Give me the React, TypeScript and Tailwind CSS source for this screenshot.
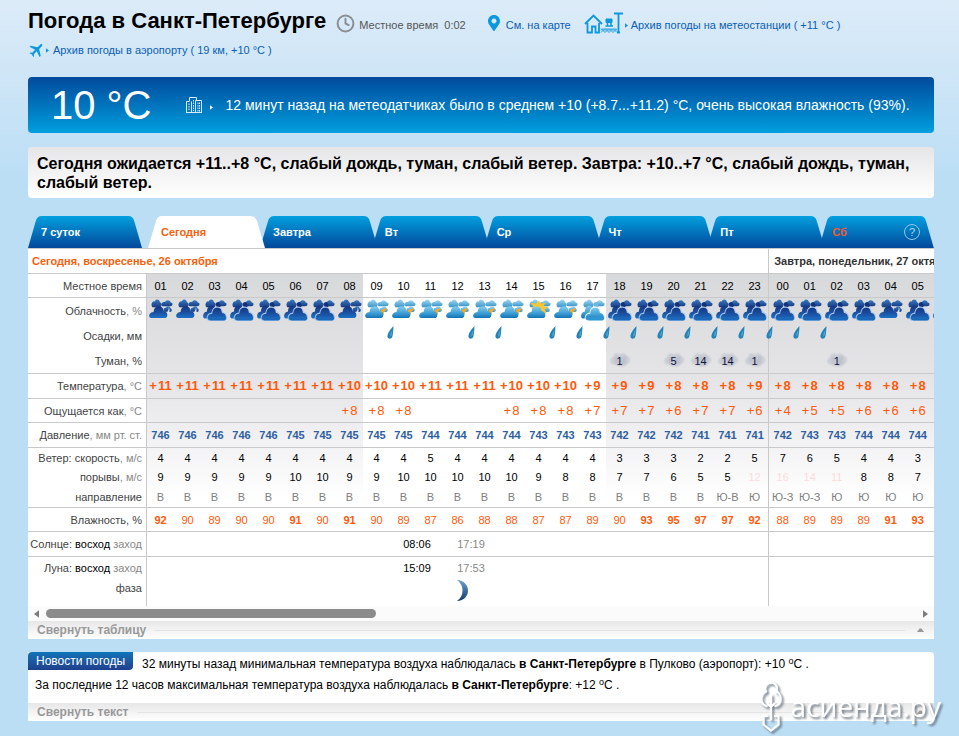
import React from "react";
import { Clock } from "lucide-react";
import { MdFlight } from "react-icons/md";
import { FaMapMarkerAlt } from "react-icons/fa";

type Sky = "overcast" | "moon" | "sun" | "bright" | "cloudy";

interface Hour {
  h: string;
  sky: Sky;
  rain?: boolean;
  fog?: string;
  t: string;
  feels?: string;
  p: string;
  wind: string;
  gust: string;
  dir: string;
  hum: string;
}

const hour = (
  h: string, sky: Sky, t: string, feels: string, p: string, wind: string,
  gust: string, dir: string, hum: string, rain = false, fog = ""
): Hour => ({ h, sky, t, feels, p, wind, gust, dir, hum, rain, fog });

const hours: Hour[] = [
  hour("01", "moon", "11", "", "746", "4", "9", "В", "92"),
  hour("02", "moon", "11", "", "746", "4", "9", "В", "90"),
  hour("03", "overcast", "11", "", "746", "4", "9", "В", "89"),
  hour("04", "overcast", "11", "", "746", "4", "9", "В", "90"),
  hour("05", "overcast", "11", "", "746", "4", "9", "В", "90"),
  hour("06", "overcast", "11", "", "745", "4", "10", "В", "91"),
  hour("07", "overcast", "11", "", "745", "4", "10", "В", "90"),
  hour("08", "moon", "10", "8", "745", "4", "9", "В", "91"),
  hour("09", "sun", "10", "8", "745", "4", "9", "В", "90"),
  hour("10", "sun", "10", "8", "745", "4", "10", "В", "89", true),
  hour("11", "sun", "11", "", "744", "5", "10", "В", "87"),
  hour("12", "sun", "11", "", "744", "4", "10", "В", "86"),
  hour("13", "sun", "11", "", "744", "4", "10", "В", "88", true),
  hour("14", "sun", "10", "8", "744", "4", "10", "В", "88", true),
  hour("15", "bright", "10", "8", "743", "4", "9", "В", "87"),
  hour("16", "sun", "10", "8", "743", "4", "8", "В", "87", true),
  hour("17", "cloudy", "9", "7", "743", "4", "8", "В", "89", true),
  hour("18", "overcast", "9", "7", "742", "3", "7", "В", "90", true, "1"),
  hour("19", "overcast", "9", "7", "742", "3", "7", "В", "93", true),
  hour("20", "overcast", "8", "6", "742", "3", "6", "В", "95", true, "5"),
  hour("21", "overcast", "8", "7", "741", "2", "5", "В", "97", true, "14"),
  hour("22", "overcast", "8", "7", "741", "2", "5", "Ю-В", "97", true, "14"),
  hour("23", "overcast", "9", "6", "741", "5", "12", "Ю", "92", true, "1"),
  hour("00", "overcast", "8", "4", "742", "7", "16", "Ю-З", "88", true),
  hour("01", "overcast", "8", "5", "743", "6", "14", "Ю-З", "89", true),
  hour("02", "overcast", "8", "5", "743", "5", "11", "Ю", "89", true, "1"),
  hour("03", "overcast", "8", "6", "744", "4", "8", "Ю", "89"),
  hour("04", "moon", "8", "6", "744", "4", "8", "Ю", "91"),
  hour("05", "overcast", "8", "6", "744", "3", "7", "Ю", "93"),
];

const TODAY = 23;
const isDay = (i: number) => i >= 8 && i <= 16;

const CLOUD = "M2 12.500Q-.5 12 .3 9.200 1.500 6.200 4.500 6.400 5 1 10 .8 14 1 14.600 5.600 18.200 6 18.400 9.500 18.400 12 16.500 12.500z";
const PUFF = "M1.500 6.500Q-.5 4.500 1.500 2.500 3 1.500 4 2 5.500-.3 8 .6 9.500 1 10 2.500 12.500 3 11.500 5.500 11 6.700 9 6.700z";

function Defs() {
  return (
    <svg className="absolute size-0" aria-hidden="true">
      <defs>
        <linearGradient id="night" x1="0" y1="0" x2="0" y2="1">
          <stop offset="0" stopColor="#15357f" />
          <stop offset="0.5" stopColor="#1b4e9f" />
          <stop offset="1" stopColor="#1a72c8" />
        </linearGradient>
        <linearGradient id="nightBack" x1="0" y1="0" x2="0" y2="1">
          <stop offset="0" stopColor="#3a79bd" />
          <stop offset="1" stopColor="#173c86" />
        </linearGradient>
        <linearGradient id="day" x1="0" y1="0" x2="0" y2="1">
          <stop offset="0" stopColor="#86cdf0" />
          <stop offset="0.6" stopColor="#3c9ed3" />
          <stop offset="1" stopColor="#1272b6" />
        </linearGradient>
        <linearGradient id="dayBack" x1="0" y1="0" x2="0" y2="1">
          <stop offset="0" stopColor="#9fd9f3" />
          <stop offset="1" stopColor="#3994c8" />
        </linearGradient>
        <radialGradient id="fog">
          <stop offset="0" stopColor="#a9aebb" stopOpacity="0.5" />
          <stop offset="0.6" stopColor="#b4b9c5" stopOpacity="0.4" />
          <stop offset="1" stopColor="#bfc4cf" stopOpacity="0" />
        </radialGradient>
        <linearGradient id="moon" x1="0" y1="0" x2="0" y2="1">
          <stop offset="0" stopColor="#6fa3cd" />
          <stop offset="1" stopColor="#12396e" />
        </linearGradient>
      </defs>
    </svg>
  );
}

function SkyIcon({ sky }: { sky: Sky }) {
  const night = sky === "overcast" || sky === "moon";
  const back = night ? "url(#nightBack)" : "url(#dayBack)";
  const front = night ? "url(#night)" : "url(#day)";
  const full = sky === "overcast" || sky === "cloudy";
  return (
    <svg viewBox="0 0 24 22" className="mx-auto mt-px block h-[22px] w-6" aria-hidden="true">
      <path d={PUFF} fill={back} transform="translate(2 0) scale(.9 1.250)" />
      <path d={PUFF} fill={back} transform="translate(12 1) scale(.98 .95)" />
      {!full && <path d={PUFF} fill={back} transform="translate(14 7) scale(.75 .9)" />}
      {sky === "sun" && <path d="M16 11l6-2-3.500 5 .5 1-3.500 3.500z" fill="#fba91a" />}
      {sky === "moon" && <path d="M19.500 8c1 3-1.500 6-4 6.500l2.500 1.800c2.500-2 3.500-5 1.500-8.300z" fill="#dfe9f7" />}
      {sky === "bright" && (
        <path d="M12 1.500l1.500 3L19 4l-3 3.500 5.500.5-4 2.500 2 3-4 3.500L6 12 4.500 9l2-1.500L3.500 4l5.500.5z" fill="#fdc62d" />
      )}
      {full ? (
        <>
          <path d="M13 4.500L16 3l2 4-4 3z" fill={night ? "#14307a" : "#6db8de"} />
          <path d={CLOUD} fill={front} transform="translate(0 5.500) scale(.85 1.120)" />
          <path d={CLOUD} fill={front} stroke={night ? "#a9c8ea" : "#f0faff"} strokeWidth="0.900" transform="translate(4 7) scale(1.050 1.150)" />
          <path d="M5.500 18H23a2.500 2.500 0 0 1-1.800 3.500H7.500A2.500 2.500 0 0 1 5.500 18z" fill={night ? "#1b68ba" : "#2c97d2"} />
        </>
      ) : (
        <path d={CLOUD} fill={front} transform="translate(0 6.500)" />
      )}
    </svg>
  );
}

function Drop() {
  return (
    <svg viewBox="0 0 7 13" className="-ml-[3px] mt-[3px] block h-[13px] w-[7px]" aria-hidden="true">
      <path d="M6.500 0C3.500 3 .5 7.500.4 10.300c0 3 4 3.300 5 .2C6.200 8 6.200 4 6.500 0z" fill="#2583b8" />
      <path d="M5.500 4C4 6 3 8 3.200 10.500c1.800-.3 2-3 2.300-6.500z" fill="#4da6d2" />
    </svg>
  );
}

function Fog({ value }: { value: string }) {
  return (
    <div className="relative h-5">
      <svg viewBox="0 0 24 18" className="mx-auto block h-[18px] w-6" aria-hidden="true">
        <circle cx="6" cy="10" r="5" fill="url(#fog)" />
        <circle cx="9" cy="6" r="5" fill="url(#fog)" />
        <circle cx="15" cy="6" r="5" fill="url(#fog)" />
        <circle cx="18" cy="9" r="5.500" fill="url(#fog)" />
        <circle cx="11" cy="11" r="6" fill="url(#fog)" />
        <circle cx="15" cy="12" r="5" fill="url(#fog)" />
      </svg>
      <span className="absolute inset-0 text-center leading-5 text-[#101040]">{value}</span>
    </div>
  );
}

function Arrow({ className }: { className: string }) {
  return (
    <svg viewBox="0 0 4 6" className={className} aria-hidden="true">
      <path d="M0 0l4 3-4 3z" fill="currentColor" />
    </svg>
  );
}

function StationIcon() {
  return (
    <svg viewBox="0 0 39 22" className="h-[22px] w-[39px] shrink-0" fill="none" stroke="#0b98dd" aria-hidden="true">
      <path d="M1 12L9.500 3.500 18 12M3.500 11v9.500h4.500v-6h3.500v6H15V11" strokeWidth="1.800" />
      <path d="M22 7h6v3.500h-6z" fill="#0b98dd" />
      <path d="M23.500 10v3.500M27 10v3.500M21.500 14h7.500" strokeWidth="1.500" />
      <path d="M30 1.500h9M34.500 1v20M33 20.500h3" strokeWidth="1.800" />
      <path d="M17 16.500l2 2 2-2 2 2 2-2 2 2 2-2 2 2 2-2M17 18.500l2-2 2 2 2-2 2 2 2-2 2 2 2-2 2 2M17 20.500l2-2 2 2 2-2 2 2 2-2 2 2 2-2 2 2" strokeWidth="0.900" />
    </svg>
  );
}

function BuildingsIcon() {
  return (
    <svg viewBox="0 0 16 16" className="size-4 shrink-0" fill="none" stroke="#d5ecfb" aria-hidden="true">
      <path d="M.5 15.500v-11h3M3.500 4V.5h7V3M5.500 15.500v-11M9.500 15.500V3.500h6v12M0 15.500h16" />
      <path d="M3 6.500v7M7.500 3v11M12 5.500v9M13.500 5.500v9" strokeDasharray="1.500 1" />
    </svg>
  );
}

const tabs = ["7 суток", "Сегодня", "Завтра", "Вт", "Ср", "Чт", "Пт", "Сб"];

function Tab({ label, i }: { label: string; i: number }) {
  const active = i === 1;
  const span =
    i === 0 ? "left-0 right-[6px]" : active ? "left-0 -right-[2px]" : i === 7 ? "-left-[3px] right-0" : "-left-[3px] -right-[3px]";
  const tone = active ? "text-[#f75f0c] z-10" : i === 7 ? "text-[#f4592a]" : "text-white";
  return (
    <button role="tab" aria-selected={active} className={`relative h-8 text-left text-[11px] font-bold ${tone} ${i < 2 ? "pl-[13px]" : "pl-[10px]"}`}>
      <span className={`absolute inset-y-0 ${span}`}>
        <svg viewBox="0 0 117 32" preserveAspectRatio="none" className="block size-full" aria-hidden="true">
          <defs>
            <linearGradient id="tab" x1="0" y1="0" x2="0" y2="1">
              <stop offset="0" stopColor="#02a0df" />
              <stop offset="1" stopColor="#03489a" />
            </linearGradient>
          </defs>
          <path d="M0 32L8 5Q9.500 0 14 0H103Q107.500 0 109 5L117 32z" fill={active ? "#fff" : "url(#tab)"} />
        </svg>
      </span>
      <span className="relative flex items-center justify-between pr-[14px]">
        {label}
        {i === 7 && (
          <span className="flex size-4 items-center justify-center rounded-full border border-[#8ec9ec] text-[11px] font-normal text-[#a9d8f2]">?</span>
        )}
      </span>
    </button>
  );
}

interface RowProps {
  label: React.ReactNode;
  height: string;
  line?: boolean;
  top?: boolean;
  plain?: boolean;
  last?: React.ReactNode;
  cell: (h: Hour) => React.ReactNode;
  text?: string;
}

function Row({ label, height, line, top, plain, last, cell, text = "" }: RowProps) {
  const b = line ? "border-b border-[#c9c9c9]" : "";
  const align = top ? "align-top" : "align-middle";
  return (
    <tr className={height}>
      <th scope="row" className={`border-r border-r-[#c9c9c9] bg-white p-0 pr-1 text-right font-normal text-[#444] ${b}`}>{label}</th>
      {hours.map((h, i) => (
        <td
          key={i}
          className={`whitespace-nowrap p-0 text-center ${align} ${text} ${b} ${plain || isDay(i) ? "bg-white" : ""} ${i === TODAY - 1 ? "border-r border-r-[#c9c9c9]" : ""}`}
        >
          {cell(h)}
        </td>
      ))}
      <td className={`p-0 ${align} ${b} ${plain ? "bg-white" : ""}`}>{last}</td>
    </tr>
  );
}

const Unit = ({ children }: { children: React.ReactNode }) => <span className="text-[#888]">{children}</span>;

const signed = (v?: string) => (v ? <><span className="mr-px">+</span>{v}</> : null);

function AstroRow({ label, height, line, children }: { label: React.ReactNode; height: string; line?: boolean; children: React.ReactNode }) {
  const b = line ? "border-b border-[#c9c9c9]" : "";
  return (
    <tr className={`${height} bg-white`}>
      <th scope="row" className={`border-r border-r-[#c9c9c9] p-0 pr-1 text-right font-normal text-[#444] ${b}`}>{label}</th>
      <td colSpan={9} className={b} />
      {children}
      <td colSpan={10} className={`border-r border-r-[#c9c9c9] ${b}`} />
      <td colSpan={7} className={b} />
    </tr>
  );
}

function Forecast() {
  return (
    <table className="w-[930px] table-fixed border-separate border-spacing-0 bg-[linear-gradient(to_bottom,#fff_25px,#d8d9db_25px,#e5e5e7_130px,#f1f1f3_190px,#fff_250px)] text-[11px] leading-4 text-black">
      <colgroup>
        <col className="w-[119px]" />
        {hours.map((_, i) => (
          <col key={i} className={i === TODAY - 1 ? "w-7" : "w-[27px]"} />
        ))}
        <col className="w-[27px]" />
      </colgroup>
      <thead>
        <tr className="h-[25px] bg-white text-left">
          <th colSpan={TODAY + 1} className="border-b border-r border-[#c9c9c9] p-0 pl-1 font-bold text-[#f75f0c]">Сегодня, воскресенье, 26 октября</th>
          <th colSpan={7} className="whitespace-nowrap border-b border-[#c9c9c9] p-0 pl-[5px] font-bold text-[#333]">Завтра, понедельник, 27 октября</th>
        </tr>
      </thead>
      <tbody>
        <Row height="h-6" line label="Местное время" cell={(h) => h.h} />
        <Row height="h-[25px]" top label={<>Облачность<Unit>, %</Unit></>} last={<SkyIcon sky="overcast" />} cell={(h) => <SkyIcon sky={h.sky} />} />
        <Row height="h-[25px]" top label="Осадки, мм" cell={(h) => (h.rain ? <Drop /> : null)} />
        <Row height="h-[26px]" line label="Туман, %" cell={(h) => (h.fog ? <Fog value={h.fog} /> : null)} />
        <Row height="h-[25px]" line text="text-[13px] font-bold text-[#ff5a0a]" label={<>Температура<Unit>, °C</Unit></>} cell={(h) => signed(h.t)} />
        <Row height="h-6" line text="text-[13px] text-[#ff5a0a]" label={<>Ощущается как<Unit>, °C</Unit></>} cell={(h) => signed(h.feels)} />
        <Row height="h-[25px]" line text="font-bold text-[#2f5f9f]" label={<>Давление<Unit>, мм рт. ст.</Unit></>} cell={(h) => h.p} />
        <Row height="h-[19px]" label={<>Ветер: скорость<Unit>, м/с</Unit></>} cell={(h) => h.wind} />
        <Row height="h-[19px]" label={<>порывы<Unit>, м/с</Unit></>} cell={(h) => (Number(h.gust) > 10 ? <span className="text-[#fbdcdc]">{h.gust}</span> : h.gust)} />
        <Row height="h-[22px]" line text="text-[#808080]" label="направление" cell={(h) => h.dir} />
        <Row height="h-6" line plain text="text-[#ff5a0a]" label="Влажность, %" cell={(h) => (Number(h.hum) > 90 ? <b>{h.hum}</b> : h.hum)} />
        <AstroRow height="h-[25px]" line label={<>Солнце: <span className="text-black">восход</span> <Unit>заход</Unit></>}>
          <td colSpan={2} className="border-b border-[#c9c9c9] p-0 text-center">08:06</td>
          <td colSpan={2} className="border-b border-[#c9c9c9] p-0 text-center text-[#888]">17:19</td>
        </AstroRow>
        <AstroRow height="h-[21px]" label={<>Луна: <span className="text-black">восход</span> <Unit>заход</Unit></>}>
          <td colSpan={2} className="p-0 text-center">15:09</td>
          <td colSpan={2} className="p-0 text-center text-[#888]">17:53</td>
        </AstroRow>
        <AstroRow height="h-7" label={<span className="block h-6">фаза</span>}>
          <td colSpan={2} className="p-0" />
          <td colSpan={2} className="p-0 pb-[3px] pl-3 align-middle">
            <svg viewBox="0 0 12 21" className="block h-[21px] w-3" aria-label="Растущая луна">
              <path d="M1 0C8 .5 12 5 12 10.500S8 20.500 1 21C5 18 6.500 14.500 6.500 10.500S5 3 1 0z" fill="url(#moon)" />
            </svg>
          </td>
        </AstroRow>
      </tbody>
    </table>
  );
}

function CollapseBar({ label }: { label: string }) {
  return (
    <button className="flex h-[18px] w-full items-center gap-2 bg-linear-to-b from-[#e7e7e7] to-white pl-[9px] pr-[10px] text-xs font-bold text-[#999]">
      {label}
      <span className="h-px flex-1 bg-[#e4e4e4]" />
      <svg viewBox="0 0 7 4" className="ml-1 h-1 w-[7px]" aria-hidden="true">
        <path d="M0 4l2.500-3.500h2L7 4z" fill="#999" />
      </svg>
    </button>
  );
}

function Watermark() {
  return (
    <div className="pointer-events-none absolute bottom-1 right-[18px] flex items-center gap-2 text-white [filter:drop-shadow(2px_2px_1px_rgba(70,85,100,0.75))]">
      <svg viewBox="0 0 24 52" className="h-[52px] w-6" fill="none" stroke="currentColor" strokeWidth="2.200" aria-hidden="true">
        <path d="M7.500 12.500a6 6 0 1 1 9 0" />
        <path d="M7.500 10.500C1 14 0 24 8.500 26.500M16.500 10.500C23 14 24 24 15.500 26.500" />
        <path d="M12 14v26M12 27l-4-4M12 27l4-4" />
        <path d="M9 36H4.500v8.500L12 50.500l7.500-6V36H15" />
      </svg>
      <span className="font-['Open_Sans','Noto_Sans',sans-serif] text-[28px] leading-9">асиенда.ру</span>
    </div>
  );
}

export default function App() {
  return (
    <div className="relative min-h-screen bg-[#bbdef5] bg-[linear-gradient(to_bottom,#dcebf8,#bbdef5_180px)] pb-[15px] pl-7 pr-[25px] pt-2 font-['Liberation_Sans',Arial,sans-serif] text-[11px] text-black">
      <Defs />
      <header>
        <div className="flex h-[30px] items-center whitespace-nowrap">
          <h1 className="pb-1 text-[22px] font-bold leading-7">Погода в Санкт-Петербурге</h1>
          <div className="ml-[10px] flex items-center gap-1 text-[#555]">
            <Clock size={19} strokeWidth={2.5} className="text-[#8a8f94]" />
            <span className="pt-1">Местное время&nbsp; 0:02</span>
          </div>
          <a href="#map" className="ml-5 flex items-center gap-1 text-[#0b5fb4]">
            <FaMapMarkerAlt size={16} className="text-[#0b98dd]" />
            <span className="pt-1">См. на карте</span>
          </a>
          <a href="#station" className="ml-[13px] flex items-center text-[#0b5fb4]">
            <StationIcon />
            <Arrow className="ml-[2px] mt-1 h-[5px] w-[3px] text-[#0b98dd]" />
            <span className="ml-[3px] pt-1">Архив погоды на метеостанции ( +11 °C )</span>
          </a>
        </div>
        <a href="#airport" className="flex h-6 items-center text-[#0b5fb4]">
          <MdFlight size={18} className="rotate-45 text-[#0b98dd]" />
          <Arrow className="h-[5px] w-[3px] text-[#0b98dd]" />
          <span className="ml-1">Архив погоды в аэропорту ( 19 км, +10 °C )</span>
        </a>
      </header>

      <main>
        <section className="mt-[15px] flex h-14 items-center rounded bg-linear-to-b from-[#034a9b] to-[#039fde] pl-[23px] text-white">
          <strong className="text-[40px] font-normal leading-[56px]">10 °C</strong>
          <div className="ml-[34px] flex items-center">
            <BuildingsIcon />
            <Arrow className="ml-2 mt-1 h-[5px] w-[3px]" />
            <p className="ml-[13px] text-sm leading-5">12 минут назад на метеодатчиках было в среднем +10 (+8.7...+11.2) °C, очень высокая влажность (93%).</p>
          </div>
        </section>

        <p className="mt-[14px] rounded bg-linear-to-b from-[#e6e6e8] to-white px-[9px] pb-[6px] pt-[7px] text-base font-bold leading-[19px]">
          Сегодня ожидается +11..+8 °C, слабый дождь, туман, слабый ветер. Завтра: +10..+7 °C, слабый дождь, туман, слабый ветер.
        </p>

        <div role="tablist" className="mt-[18px] grid grid-cols-[120px_115px_repeat(6,1fr)]">
          {tabs.map((label, i) => (
            <Tab key={label} label={label} i={i} />
          ))}
        </div>

        <section className="bg-white">
          <div className="overflow-hidden border-t border-[#c9c9c9]">
            <Forecast />
          </div>
          <div className="flex h-[15px] items-center bg-[#fbfbfb] px-[6px]">
            <button aria-label="Назад" className="rotate-180 text-[#7c7c7c]"><Arrow className="block h-2 w-[5px]" /></button>
            <div className="ml-[7px] mr-[9px] flex-1"><div className="h-[9px] w-[38%] rounded-full bg-[#8b8b8b]" /></div>
            <button aria-label="Вперёд" className="text-[#7c7c7c]"><Arrow className="block h-2 w-[5px]" /></button>
          </div>
          <CollapseBar label="Свернуть таблицу" />
        </section>

        <section className="mt-[13px] rounded-tr bg-white">
          <div className="h-[51px] text-xs">
            <div className="flex items-start">
              <h2 className="h-[18px] rounded-br rounded-tl bg-linear-to-b from-[#0d74b8] to-[#1f3f8c] px-2 leading-[18px] text-white">Новости погоды</h2>
              <p className="pl-[9px] pt-1 leading-4">32 минуты назад минимальная температура воздуха наблюдалась <b>в Санкт-Петербурге</b> в Пулково (аэропорт): +10 <sup className="text-[9px]">o</sup>C .</p>
            </div>
            <p className="pl-[7px] pt-[5px] leading-4">За последние 12 часов максимальная температура воздуха наблюдалась <b>в Санкт-Петербурге</b>: +12 <sup className="text-[9px]">o</sup>C .</p>
          </div>
          <CollapseBar label="Свернуть текст" />
        </section>
      </main>
      <Watermark />
    </div>
  );
}
